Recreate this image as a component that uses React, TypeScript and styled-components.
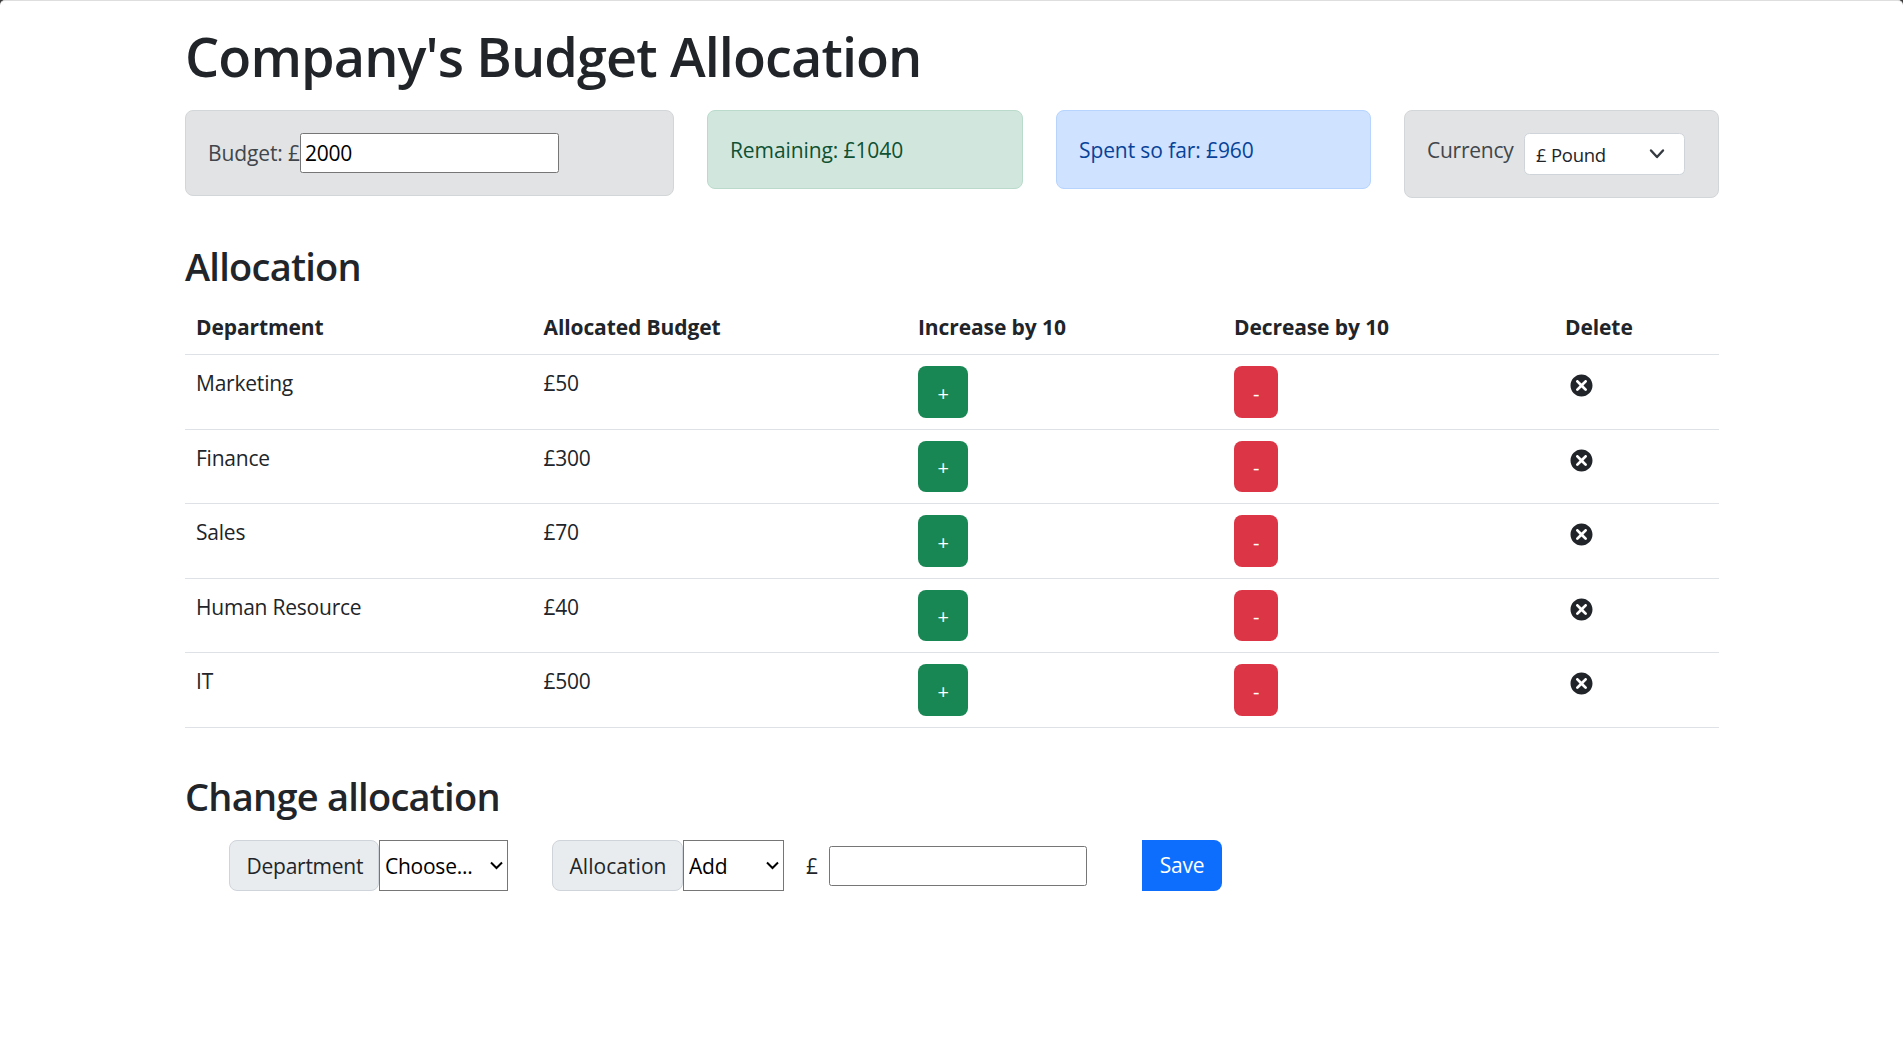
import React, { useState } from 'react';
import styled, { createGlobalStyle } from 'styled-components';
import { TiDelete } from 'react-icons/ti';

const GlobalStyle = createGlobalStyle`
  *, *::before, *::after { box-sizing: border-box; }
  body {
    margin: 0;
    background: #3c3c3c;
    color: #212529;
    font-family: "Open Sans", "Noto Sans", sans-serif;
    font-size: 21px;
    line-height: 33px;
    letter-spacing: -0.25px;
  }
  input, select, button { font: inherit; letter-spacing: inherit; margin: 0; }
`;

const Page = styled.div`
  min-height: 1037px;
  border-top: 1px solid #dedede;
  border-radius: 5px 5px 0 0;
  background: #fff;
`;

const Container = styled.main`
  width: 1534px;
  margin-left: 185px;
  padding-top: 22px;
`;

const Title = styled.h1`
  margin: 0 0 21px;
  height: 66px;
  font-size: 54px;
  line-height: 67px;
  font-weight: 600;
  letter-spacing: -0.9px;
  white-space: nowrap;
`;

const Heading = styled.h3<{ $space: number; $bottom: number }>`
  margin: 0 0 ${(p) => p.$bottom}px;
  padding-top: ${(p) => p.$space}px;
  font-size: 38px;
  line-height: 46px;
  font-weight: 600;
  letter-spacing: -0.75px;
`;

const Summary = styled.section`
  display: grid;
  grid-template-columns: 489px 316px 315px 315px;
  column-gap: 33px;
  align-items: start;
  height: 88px;
`;

const tones = {
  secondary: ['#e2e3e5', '#d3d6d8', '#41464b'],
  success: ['#d1e7dd', '#badbcc', '#0f5132'],
  primary: ['#cfe2ff', '#b6d4fe', '#084298'],
};

const Alert = styled.div<{ $tone: keyof typeof tones; $height: number }>`
  display: flex;
  align-items: flex-start;
  height: ${(p) => p.$height}px;
  padding: 22px;
  border: 1px solid ${(p) => tones[p.$tone][1]};
  border-radius: 8px;
  background: ${(p) => tones[p.$tone][0]};
  color: ${(p) => tones[p.$tone][2]};
  white-space: nowrap;
`;

const AlertText = styled.span`
  padding-top: 1px;
  letter-spacing: -0.1px;
`;

const BudgetLabel = styled.label`
  width: 92px;
  padding-top: 4px;
  letter-spacing: -0.12px;
`;

const NumberInput = styled.input<{ $width: number }>`
  width: ${(p) => p.$width}px;
  height: 40px;
  padding: 1px 4px;
  border: 1px solid #767676;
  border-radius: 2.5px;
  background: #fff;
  color: #000;
  outline: none;
`;

const CurrencyLabel = styled.label`
  width: 97px;
  padding-top: 1px;
`;

const SelectBox = styled.div`
  display: grid;
  align-items: center;

  > * { grid-area: 1 / 1; }
  > svg { justify-self: end; pointer-events: none; }
`;

const CurrencySelect = styled.select`
  width: 161px;
  height: 42px;
  padding: 1px 11px 0;
  border: 1px solid #ced4da;
  border-radius: 5.5px;
  appearance: none;
  background: #fff;
  color: #212529;
  font-size: 18.5px;
`;

const Table = styled.table`
  width: 1534px;
  table-layout: fixed;
  border-collapse: separate;
  border-spacing: 0;
`;

const HeadCell = styled.th<{ $width: number }>`
  width: ${(p) => p.$width}px;
  height: 54px;
  padding: 10px 11px;
  border-bottom: 1px solid #dee2e6;
  text-align: left;
  line-height: 33px;
  font-weight: 700;
  letter-spacing: -0.1px;
`;

const StepButton = styled.button<{ $color: string; $width: number }>`
  display: block;
  width: ${(p) => p.$width}px;
  height: 52px;
  padding: 2px 0 0;
  border: 0;
  border-radius: 8px;
  background: ${(p) => p.$color};
  color: #fff;
  font-size: 20px;
  text-align: center;
`;

const Cell = styled.td`
  height: 75px;
  padding: 11px 11px 0;
  border-bottom: 1px solid #dee2e6;
  vertical-align: top;
`;

const TextCell = styled(Cell)`
  padding-top: 12px;
  letter-spacing: -0.22px;
`;

const Row = styled.tr`
  &:nth-child(even) ${Cell} { height: 74px; }
  &:nth-child(even) ${StepButton} { height: 51px; }
`;

const DeleteIcon = styled(TiDelete)`
  display: block;
  margin-top: 3px;
`;

const Form = styled.form`
  display: flex;
  align-items: center;
  height: 51px;
  margin-left: 44px;
`;

const GroupText = styled.label<{ $width: number; $gap?: number; $tracking?: number }>`
  width: ${(p) => p.$width}px;
  height: 51px;
  margin-left: ${(p) => p.$gap ?? 0}px;
  padding-left: 16.5px;
  border: 1px solid #ced4da;
  border-radius: 8px;
  background: #e9ecef;
  line-height: 50px;
  letter-spacing: ${(p) => p.$tracking ?? -0.25}px;
`;

const PlainSelect = styled.select<{ $width: number }>`
  width: ${(p) => p.$width}px;
  height: 51px;
  padding: 2px 5px 0;
  border: 1px solid #767676;
  border-radius: 0;
  appearance: none;
  background: #fff;
  color: #000;
`;

const Pound = styled.span`
  width: 23px;
  margin: 1px 0 0 22px;
`;

const SaveButton = styled.button`
  width: 80px;
  height: 51px;
  margin-left: 55px;
  padding: 0;
  border: 0;
  border-radius: 0 8px 8px 0;
  background: #0d6efd;
  color: #fff;
`;

const CurrencyChevron = styled.svg`
  margin: 0 19px 0 0;
`;

const SelectChevron = styled.svg`
  margin: 0 5px 1px 0;
`;

function SelectArrow() {
  return (
    <SelectChevron width="13" height="9" viewBox="0 0 13 9" fill="none" stroke="#000" strokeWidth="2">
      <path d="M1 1.5l5.5 5.5L12 1.5" />
    </SelectChevron>
  );
}

const columns: [string, number][] = [
  ['Department', 347.5],
  ['Allocated Budget', 374.5],
  ['Increase by 10', 316],
  ['Decrease by 10', 331],
  ['Delete', 165],
];

const departments: [string, number][] = [
  ['Marketing', 50],
  ['Finance', 300],
  ['Sales', 70],
  ['Human Resource', 40],
  ['IT', 500],
];

export default function App() {
  const [budget, setBudget] = useState('2000');
  const [rows, setRows] = useState(departments);
  const spent = rows.reduce((sum, [, cost]) => sum + cost, 0);

  const change = (name: string, delta: number) =>
    setRows(rows.map(([n, cost]) => (n === name ? [n, cost + delta] : [n, cost])));

  return (
    <>
      <GlobalStyle />
      <Page>
        <Container>
          <Title>Company's Budget Allocation</Title>
          <Summary>
            <Alert $tone="secondary" $height={86}>
              <BudgetLabel htmlFor="budget">Budget: £</BudgetLabel>
              <NumberInput id="budget" $width={259} value={budget} onChange={(e) => setBudget(e.target.value)} />
            </Alert>
            <Alert $tone="success" $height={79}>
              <AlertText>Remaining: £{Number(budget) - spent}</AlertText>
            </Alert>
            <Alert $tone="primary" $height={79}>
              <AlertText>Spent so far: £{spent}</AlertText>
            </Alert>
            <Alert $tone="secondary" $height={88}>
              <CurrencyLabel htmlFor="currency">Currency</CurrencyLabel>
              <SelectBox>
                <CurrencySelect id="currency">
                  <option>£ Pound</option>
                </CurrencySelect>
                <CurrencyChevron width="18" height="12" viewBox="0 0 18 12" fill="none" stroke="#343a40" strokeWidth="2.4" strokeLinecap="round" strokeLinejoin="round">
                  <path d="M3 2.5l6 6.5 6-6.5" />
                </CurrencyChevron>
              </SelectBox>
            </Alert>
          </Summary>

          <Heading $space={45} $bottom={12}>Allocation</Heading>
          <Table>
            <thead>
              <tr>
                {columns.map(([label, width]) => (
                  <HeadCell key={label} $width={width}>{label}</HeadCell>
                ))}
              </tr>
            </thead>
            <tbody>
              {rows.map(([name, cost]) => (
                <Row key={name}>
                  <TextCell>{name}</TextCell>
                  <TextCell>£{cost}</TextCell>
                  <Cell>
                    <StepButton $color="#198754" $width={50} onClick={() => change(name, 10)}>+</StepButton>
                  </Cell>
                  <Cell>
                    <StepButton $color="#dc3545" $width={44} onClick={() => change(name, -10)}>-</StepButton>
                  </Cell>
                  <Cell>
                    <DeleteIcon size={33} onClick={() => change(name, -cost)} />
                  </Cell>
                </Row>
              ))}
            </tbody>
          </Table>

          <Heading $space={45} $bottom={21}>Change allocation</Heading>
          <Form onSubmit={(e) => e.preventDefault()}>
            <GroupText htmlFor="department" $width={150}>Department</GroupText>
            <SelectBox>
              <PlainSelect id="department" $width={129}>
                <option>Choose...</option>
                {departments.map(([name]) => <option key={name}>{name}</option>)}
              </PlainSelect>
              <SelectArrow />
            </SelectBox>
            <GroupText htmlFor="action" $width={131} $gap={44} $tracking={0.05}>Allocation</GroupText>
            <SelectBox>
              <PlainSelect id="action" $width={101}>
                <option>Add</option>
                <option>Reduce</option>
              </PlainSelect>
              <SelectArrow />
            </SelectBox>
            <Pound>£</Pound>
            <NumberInput aria-label="Cost" $width={258} />
            <SaveButton>Save</SaveButton>
          </Form>
        </Container>
      </Page>
    </>
  );
}
